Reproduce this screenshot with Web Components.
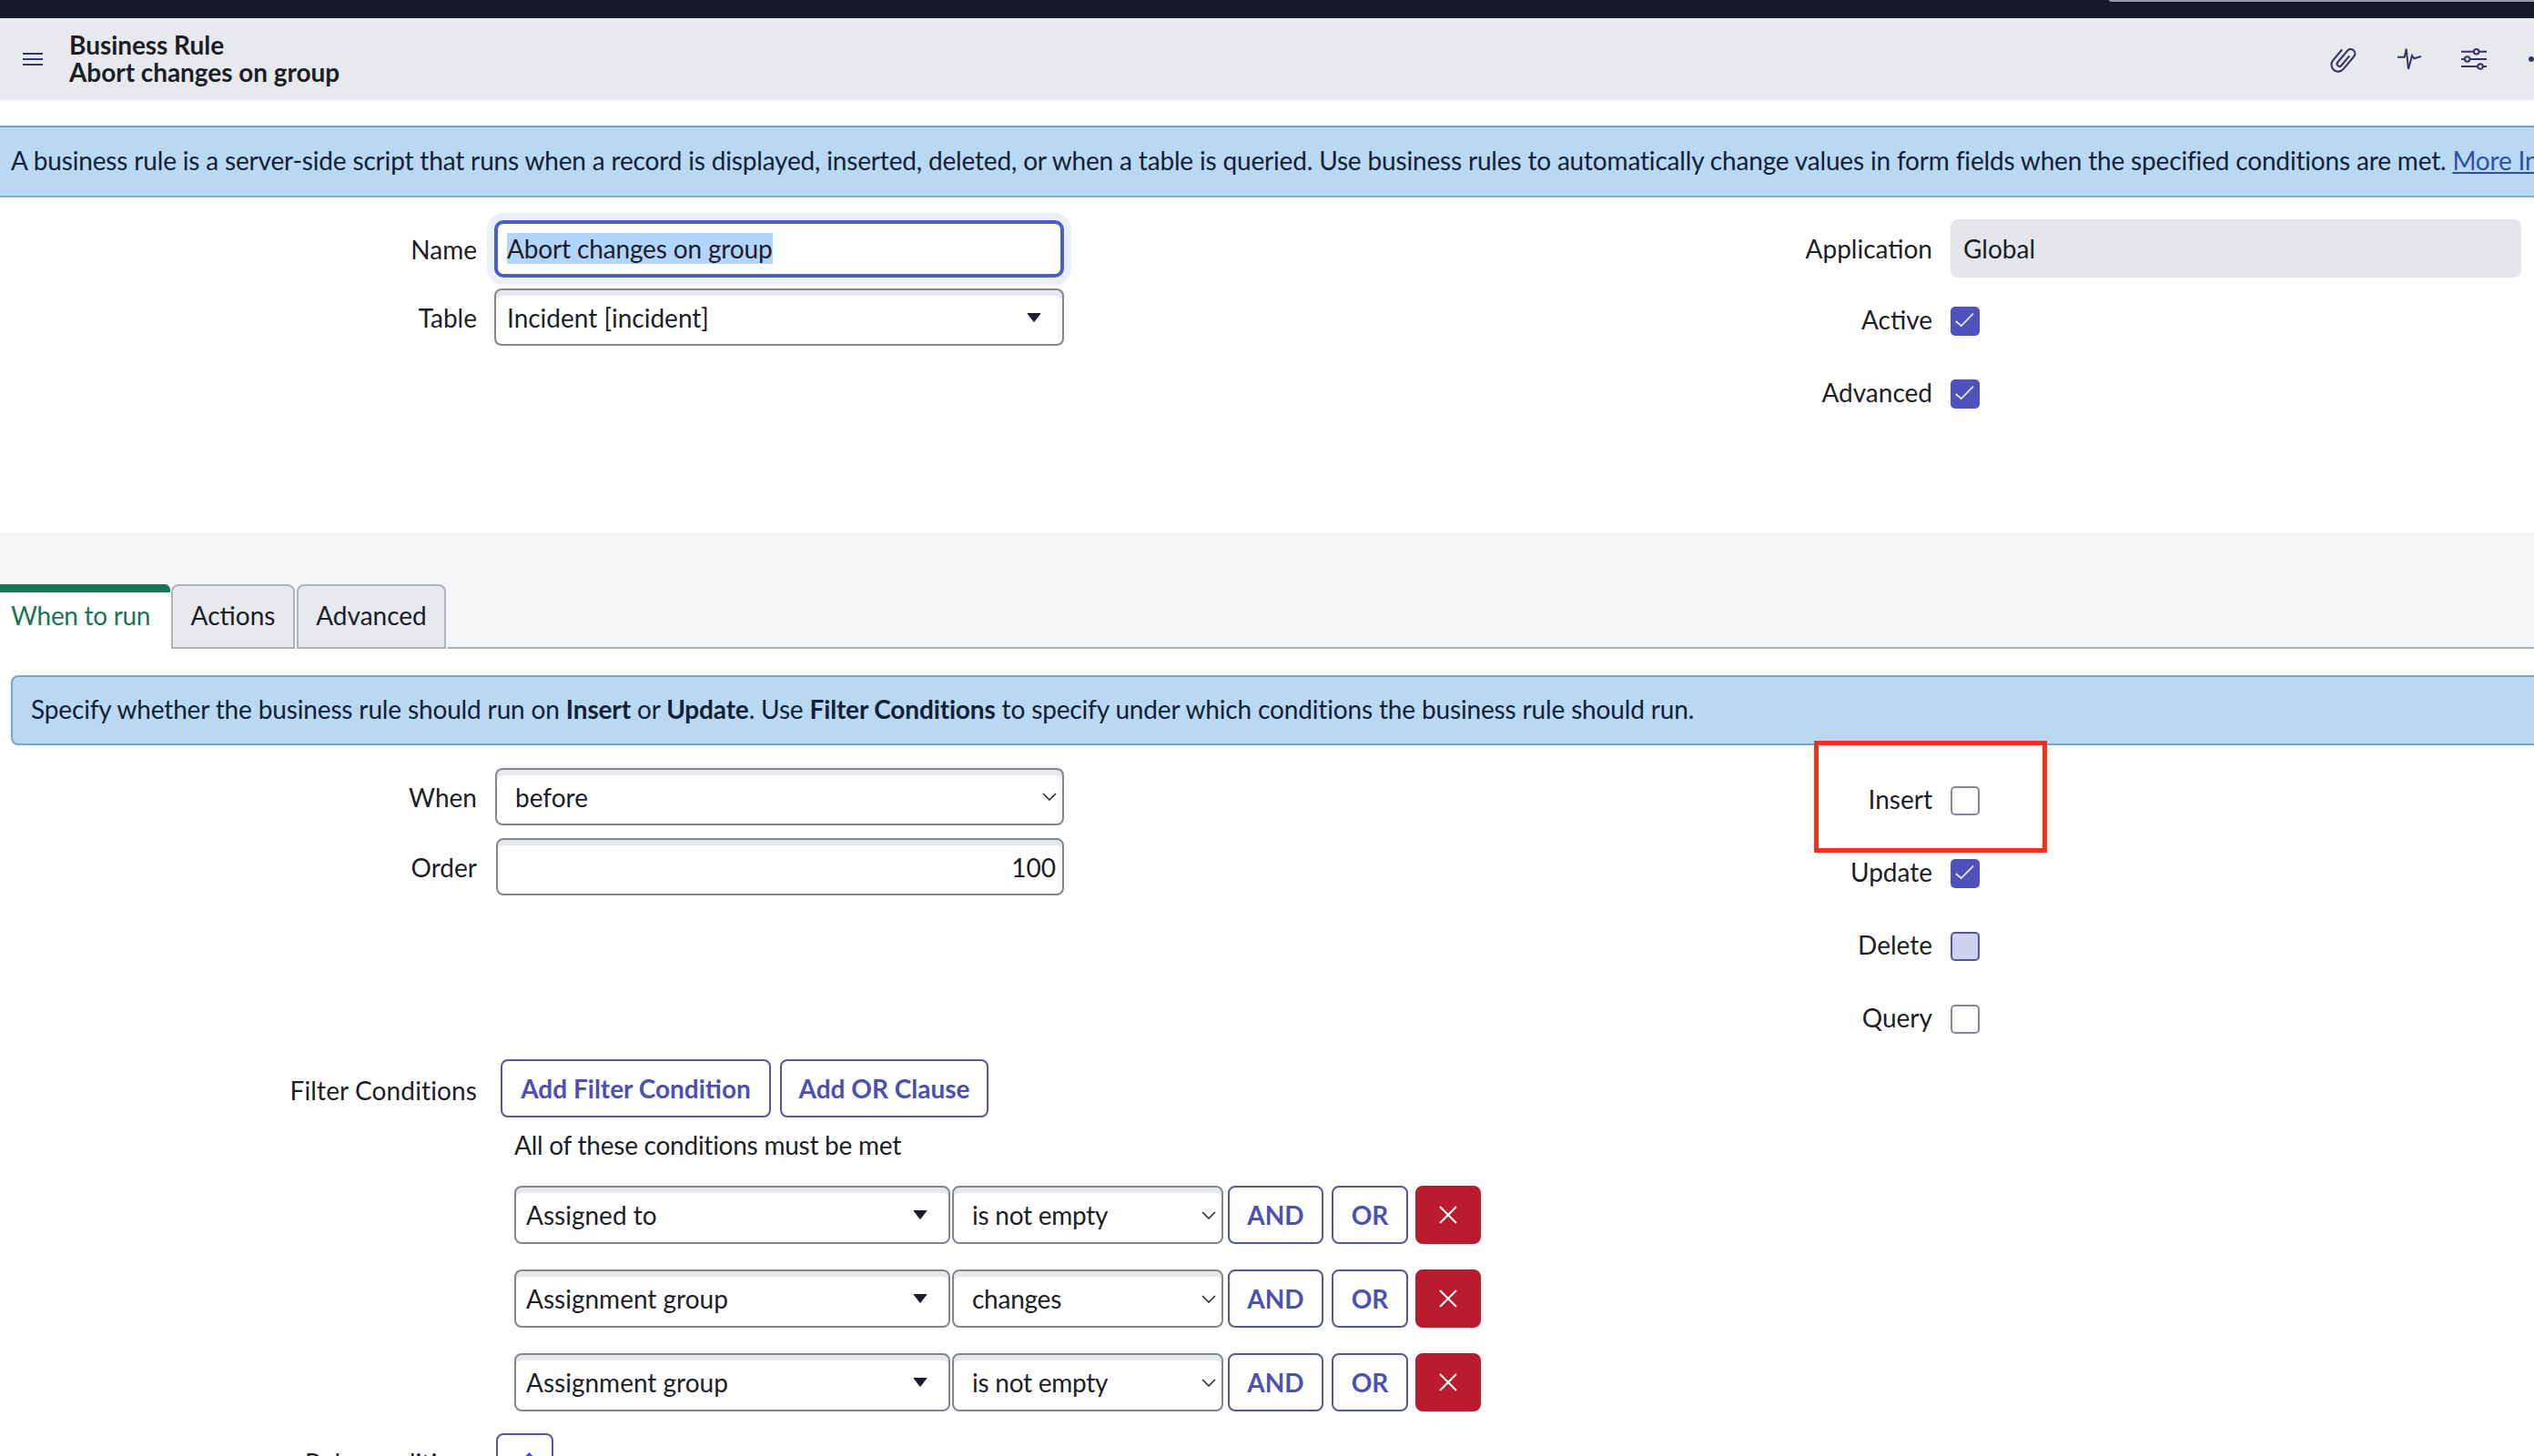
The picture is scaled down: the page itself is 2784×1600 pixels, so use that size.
<!DOCTYPE html>
<html>
<head>
<meta charset="utf-8">
<title>Business Rule</title>
<style>
  html, body { margin: 0; width: 2784px; height: 1600px; overflow: hidden; background: #fff; }
  body { font-family: "Lato", "Open Sans", sans-serif; font-size: 28px; color: #1c1e27; }
  b { font-weight: 700; }
  sn-columns.top { height: 368px; }
  sn-info { margin: 29px -20px 0 12px; }
  .stack { display: flex; flex-direction: column; }
  .gap12 { gap: 12px; }
  .gap14 { gap: 14px; }
  .filter { margin-top: 180px; }
  .role { margin-top: 24px; }
  .top-gap { margin-bottom: 8px; }
  .wide { margin-left: -1px; }
</style>
<script>
class SnBase extends HTMLElement {
  constructor() {
    super();
    this.attachShadow({ mode: 'open' });
  }
  connectedCallback() {
    this.shadowRoot.innerHTML = this.render();
  }
}

customElements.define('sn-topbar', class extends SnBase {
  render() {
    return `<style>
      :host { display: flex; justify-content: flex-end; height: 20px; background: #181926; }
      div { width: 467px; height: 2px; background: #96969e; border-bottom-left-radius: 4px; }
    </style><div></div>`;
  }
});

customElements.define('sn-header', class extends SnBase {
  render() {
    return `<style>
      :host { display: flex; align-items: center; height: 90px; background: #e7e9ed; color: #33366b; overflow: hidden; }
      .menu { flex: none; width: 76px; display: flex; padding-left: 25px; box-sizing: border-box; }
      .title { flex: 1; font-weight: 700; font-size: 28px; line-height: 30px; color: #1c1e27; padding-bottom: 2px; letter-spacing: -0.05px; }
      .icons { flex: none; display: flex; margin-right: -42px; }
      .icons span { width: 72px; display: flex; align-items: center; justify-content: center; }
      .icons span:nth-child(2) { padding-left: 4px; box-sizing: border-box; }
      svg { display: block; fill: none; stroke: currentColor; stroke-width: 2; }
    </style>
    <div class="menu"><svg width="22" height="16" viewBox="0 0 22 16"><path d="M0 2H22M0 8H22M0 14H22"/></svg></div>
    <div class="title"><slot></slot></div>
    <div class="icons">
      <span><svg width="30" height="32" viewBox="0 0 28 30"><g transform="rotate(40 14 15)"><path d="M7 8V22.5a7 7 0 0 0 14 0V5.5a4.5 4.5 0 0 0 -9 0V21a2.5 2.5 0 0 0 5 0V8"/></g></svg></span>
      <span><svg width="30" height="26" viewBox="113 21 30 26"><path d="M114 31.7H121.7L123.7 22.7 126 45 130 30 132.3 33.3 140 31"/></svg></span>
      <span><svg width="30" height="26" viewBox="184 21 30 26"><path d="M185 25.7H213M185 34H213M185 42H213"/><g fill="#e7e9ed"><circle cx="201.7" cy="25.7" r="2.8"/><circle cx="191.7" cy="34" r="2.8"/><circle cx="206" cy="42" r="2.8"/></g></svg></span>
      <span><svg width="24" height="6" viewBox="0 0 24 6"><g fill="currentColor" stroke="none"><circle cx="3" cy="3" r="3"/><circle cx="12" cy="3" r="3"/><circle cx="21" cy="3" r="3"/></g></svg></span>
    </div>`;
  }
});

customElements.define('sn-banner', class extends SnBase {
  render() {
    return `<style>
      :host { display: flex; align-items: center; box-sizing: border-box; height: 79px; margin-top: 28px; padding: 0 0 3px 12px;
        background: #b9d9f2; border-top: 2px solid #6ba6d8; border-bottom: 2px solid #7fb0cf; color: #0f2238; white-space: nowrap; overflow: hidden;
        letter-spacing: -0.17px; }
      ::slotted(a) { color: #2f4fa8; text-decoration: underline; }
    </style><slot></slot>`;
  }
});

customElements.define('sn-columns', class extends SnBase {
  render() {
    return `<style>
      :host { display: flex; }
      .left { flex: none; width: 1169px; box-sizing: border-box; padding-top: 25px; }
      .right { flex: 1; position: relative; box-sizing: border-box; padding: var(--right-top, 21px) 14px 0 0; }
    </style>
    <div class="left"><slot name="left"></slot></div>
    <div class="right"><slot name="right"></slot></div>`;
  }
});

customElements.define('sn-field', class extends SnBase {
  render() {
    return `<style>
      :host { display: grid; grid-template-columns: var(--label-w, 524px) 1fr; column-gap: 20px; align-items: center; }
      :host([top]) { align-items: start; }
      :host([top]) .label { line-height: 68px; letter-spacing: 0.12px; }
      :host([check]) { height: 80px; }
      :host([check]) .label { padding-bottom: 4px; }
      .label { text-align: right; white-space: nowrap; }
    </style>
    <div class="label">${this.getAttribute('label')}</div>
    <div><slot></slot></div>`;
  }
});

customElements.define('sn-input', class extends SnBase {
  render() {
    return `<style>
      :host { display: flex; align-items: center; box-sizing: border-box; height: 63px; padding: 0 10px 0 9px; white-space: nowrap;
        background: #fff; border: 2px solid #82868e; border-radius: 8px; box-shadow: inset 0 6px 0 #e7e8eb; }
      :host([focus]) { border: 4px solid #4a60c8; border-radius: 10px; box-shadow: 0 0 0 8px #eceefa; padding-left: 10px; padding-bottom: 2px; letter-spacing: -0.15px; }
      :host([readonly]) { height: 64px; padding-left: 14px; background: #e4e6ea; border: 0; box-shadow: none; }
      :host([number]) { justify-content: flex-end; padding: 0 7px 0 0; margin-left: 1px; }
      ::slotted(mark) { background: #b3d4fd; color: inherit; line-height: 34px; display: inline-block; }
    </style><slot></slot>`;
  }
});

customElements.define('sn-select', class extends SnBase {
  render() {
    const arrow = this.hasAttribute('ref')
      ? '<svg width="16" height="10" viewBox="0 0 16 10"><path d="M1 0.5H15L8 9.5Z" fill="#1c1e27" stroke="#1c1e27" stroke-linejoin="round"/></svg>'
      : '<svg width="16" height="9" viewBox="0 0 16 9"><path d="M1 1L8 8 15 1" fill="none" stroke="#2a2c35" stroke-width="1.6"/></svg>';
    return `<style>
      :host { display: flex; align-items: center; justify-content: space-between; box-sizing: border-box; height: 63px; white-space: nowrap;
        padding: 0 6px 0 20px; background: #fff; border: 2px solid #82868e; border-radius: 8px; box-shadow: inset 0 6px 0 #e7e8eb; }
      :host([ref]) { padding: 0 23px 0 11px; }
      svg { display: block; }
    </style><span><slot></slot></span>${arrow}`;
  }
});

customElements.define('sn-check', class extends SnBase {
  render() {
    const tick = this.hasAttribute('checked')
      ? '<svg width="32" height="32" viewBox="0 0 32 32"><path d="M5.7 16L11.7 21 25 7.7" fill="none" stroke="#eceaf8" stroke-width="1.7"/></svg>'
      : '';
    return `<style>
      :host { display: block; box-sizing: border-box; width: 32px; height: 32px; border-radius: 5px; background: #fff; border: 2px solid #83878f; }
      :host([checked]) { background: #4f52bd; border: 0; }
      :host([mixed]) { background: #ced1ef; border-color: #54579f; }
      svg { display: block; }
    </style>${tick}`;
  }
});

customElements.define('sn-button', class extends SnBase {
  render() {
    return `<style>
      :host { display: flex; align-items: center; justify-content: center; box-sizing: border-box; flex: none; height: 64px; white-space: nowrap;
        background: #fff; border: 2px solid #54579f; border-radius: 8px; color: #4c50b0; font-weight: 700; }
      :host([danger]) { background: #b81c2e; border-color: #b81c2e; }
    </style><slot></slot>`;
  }
});

customElements.define('sn-tabs', class extends SnBase {
  render() {
    return `<style>
      :host { display: flex; height: 128px; box-sizing: border-box; padding-top: 57px; background: #f5f6f8; }
      .rest { flex: 1; border-bottom: 2px solid #a9adb5; }
    </style><slot></slot><div class="rest"></div>`;
  }
});

customElements.define('sn-tab', class extends SnBase {
  render() {
    return `<style>
      :host { display: flex; align-items: center; justify-content: center; box-sizing: border-box; margin-right: 2px;
        background: #e7e9ed; border: 2px solid #b0b3ba; border-radius: 8px 8px 0 0; padding-bottom: 4px; }
      :host([active]) { justify-content: flex-start; padding: 0 0 13px 12px; margin-right: 1px; background: #fff; border: 0; border-top: 9px solid #1b7458;
        border-top-right-radius: 6px; border-top-left-radius: 0; color: #1d7357; letter-spacing: -0.3px; }
    </style><slot></slot>`;
  }
});

customElements.define('sn-info', class extends SnBase {
  render() {
    return `<style>
      :host { display: flex; align-items: center; box-sizing: border-box; height: 77px; padding: 0 0 3px 20px; white-space: nowrap;
        background: #b9d9f2; border: 2px solid #6ea7d6; border-radius: 8px; color: #0f2238; letter-spacing: -0.15px; }
    </style><span><slot></slot></span>`;
  }
});

customElements.define('sn-filter', class extends SnBase {
  render() {
    return `<style>
      :host { display: block; }
      .actions { display: flex; gap: 10px; padding-left: 6px; }
      .note { padding-left: 21px; line-height: 60px; margin-bottom: 15px; white-space: nowrap; letter-spacing: -0.25px; }
      .rows { display: flex; flex-direction: column; gap: 28px; padding-left: 21px; }
    </style>
    <div class="actions"><slot name="actions"></slot></div>
    <div class="note">${this.getAttribute('note')}</div>
    <div class="rows"><slot></slot></div>`;
  }
});

customElements.define('sn-condition', class extends SnBase {
  render() {
    return `<style>
      :host { display: block; width: 1062px; }
      .row { display: flex; }
      sn-select { height: 64px; }
      sn-select:first-child { width: 479px; margin-right: 2px; }
      sn-select:nth-child(2) { width: 298px; margin-right: 5px; letter-spacing: -0.25px; }
      .and { width: 105px; margin-right: 9px; }
      .or { width: 84px; margin-right: 8px; }
      .del { width: 72px; }
      svg { display: block; }
    </style>
    <div class="row">
      <sn-select ref>${this.getAttribute('field')}</sn-select>
      <sn-select>${this.getAttribute('op')}</sn-select>
      <sn-button class="and">AND</sn-button>
      <sn-button class="or">OR</sn-button>
      <sn-button class="del" danger><svg width="20" height="20" viewBox="0 0 20 20"><path d="M1 1L19 19M19 1L1 19" stroke="#fff" stroke-width="2"/></svg></sn-button>
    </div>`;
  }
});

customElements.define('sn-highlight', class extends SnBase {
  render() {
    return `<style>
      :host { position: absolute; left: 824px; top: -5px; width: 256px; height: 123px; box-sizing: border-box; border: 5px solid #f0321a; pointer-events: none; }
    </style>`;
  }
});
</script>
</head>
<body>
  <sn-topbar></sn-topbar>
  <sn-header>Business Rule<br>Abort changes on group</sn-header>
  <sn-banner>A business rule is a server-side script that runs when a record is displayed, inserted, deleted, or when a table is queried. Use business rules to automatically change values in form fields when the specified conditions are met.&nbsp;<a>More Information</a></sn-banner>

  <sn-columns class="top" style="--right-top:24px">
    <div slot="left" class="stack gap12">
      <sn-field label="Name"><sn-input focus class="wide"><mark>Abort changes on group</mark></sn-input></sn-field>
      <sn-field label="Table"><sn-select ref class="wide" style="padding-left:12px">Incident [incident]</sn-select></sn-field>
    </div>
    <div slot="right" class="stack" style="--label-w:954px">
      <sn-field label="Application" class="top-gap"><sn-input readonly>Global</sn-input></sn-field>
      <sn-field label="Active" check><sn-check checked></sn-check></sn-field>
      <sn-field label="Advanced" check><sn-check checked></sn-check></sn-field>
    </div>
  </sn-columns>

  <sn-tabs>
    <sn-tab active style="width:187px">When to run</sn-tab>
    <sn-tab style="width:136px">Actions</sn-tab>
    <sn-tab style="width:164px">Advanced</sn-tab>
  </sn-tabs>

  <sn-info>Specify whether the business rule should run on <b>Insert</b> or <b>Update</b>. Use <b>Filter Conditions</b> to specify under which conditions the business rule should run.</sn-info>

  <sn-columns>
    <div slot="left" class="stack">
      <div class="stack gap14">
        <sn-field label="When"><sn-select>before</sn-select></sn-field>
        <sn-field label="Order"><sn-input number>100</sn-input></sn-field>
      </div>
      <sn-field label="Filter Conditions" class="filter" top>
        <sn-filter note="All of these conditions must be met">
          <sn-button slot="actions" style="width:297px">Add Filter Condition</sn-button>
          <sn-button slot="actions" style="width:229px">Add OR Clause</sn-button>
          <sn-condition field="Assigned to" op="is not empty"></sn-condition>
          <sn-condition field="Assignment group" op="changes"></sn-condition>
          <sn-condition field="Assignment group" op="is not empty"></sn-condition>
        </sn-filter>
      </sn-field>
      <sn-field label="Role conditions" class="role">
        <sn-button style="width:63px;margin-left:1px"><svg width="30" height="30" viewBox="0 0 24 24" fill="none" stroke="#4f52bd" stroke-width="1.8" style="display:block"><path d="M15.5 4.5l4 4L8 20l-5 1 1-5Z"/></svg></sn-button>
      </sn-field>
    </div>
    <div slot="right" style="--label-w:954px">
      <sn-highlight></sn-highlight>
      <sn-field label="Insert" check><sn-check></sn-check></sn-field>
      <sn-field label="Update" check><sn-check checked></sn-check></sn-field>
      <sn-field label="Delete" check><sn-check mixed></sn-check></sn-field>
      <sn-field label="Query" check><sn-check></sn-check></sn-field>
    </div>
  </sn-columns>
</body>
</html>
